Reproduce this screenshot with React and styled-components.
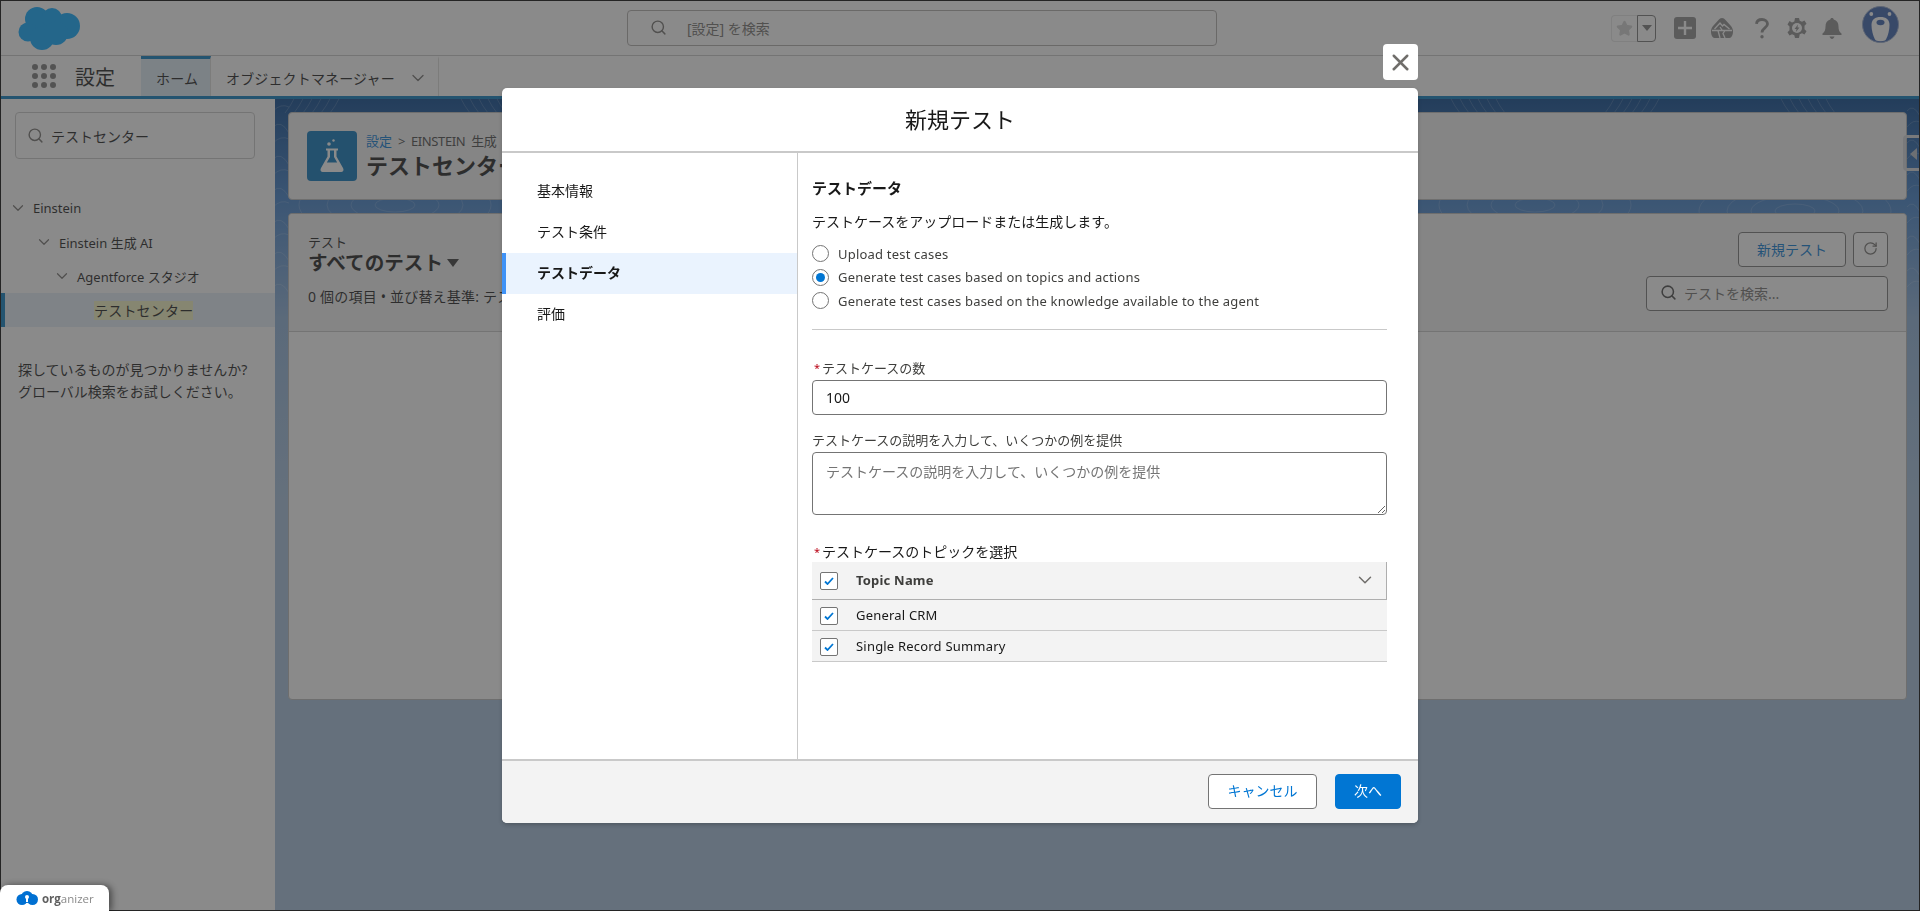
import React from "react";
import styled, { createGlobalStyle } from "styled-components";
import { ChevronDown, Search, X, Star, RotateCw } from "lucide-react";

const FONT = `"Noto Sans", "Noto Sans CJK JP", sans-serif`;

const Global = createGlobalStyle`
  * { box-sizing: border-box; }
  html, body { margin: 0; padding: 0; height: 100%; overflow: hidden; }
  body { font-family: ${FONT}; color: #181818; font-size: 13px; }
`;

const Page = styled.div`
  width: 1920px; height: 911px; display: flex; flex-direction: column;
  border: 1px solid #000; background: #fff; overflow: hidden;
`;

/* ---------- global header ---------- */
const Header = styled.header`
  height: 55px; flex: none; display: grid; grid-template-columns: 626px 590px 1fr;
  align-items: center; background: #fff; border-bottom: 1px solid #c9c9c9;
`;
const LogoCell = styled.div`padding-left: 17px; display: flex; align-items: center;`;
const GlobalSearch = styled.div`
  height: 36px; display: flex; align-items: center; gap: 20px; padding: 0 0 1px 22px;
  border: 1px solid #b0adab; border-radius: 4px; color: #706e6b; font-size: 14px;
  background: #fff;
`;
const HeaderRight = styled.div`display: flex; align-items: center; justify-content: flex-end; padding-right: 20px;`;
const FavGroup = styled.div`display: flex; height: 27px; width: 45px; margin-right: 11px;`;
const FavStar = styled.div`
  width: 26px; display: flex; align-items: center; justify-content: center;
  border: 1px solid #e5e5e5; border-right: none; border-radius: 4px 0 0 4px; color: #d0d0d0;
`;
const FavCaret = styled.div`
  width: 19px; border: 1px solid #747474; border-radius: 0 4px 4px 0;
  display: flex; align-items: center; justify-content: center;
  &::after { content: ""; border-left: 5px solid transparent; border-right: 5px solid transparent; border-top: 6px solid #777; }
`;
const IconSlot = styled.div`
  width: ${(p) => p.$w}px; display: flex; justify-content: center; align-items: center; color: #8a8a8a;
`;
const Avatar = styled.div`margin-left: 9px; width: 37px; height: 37px; margin-top: -8px;`;

/* ---------- app nav ---------- */
const Nav = styled.nav`
  height: 43px; flex: none; display: flex; background: #fff; border-bottom: 3px solid #0078be;
`;
const Launcher = styled.div`width: 140px; display: flex; align-items: center; padding-left: 31px; gap: 19px;`;
const Dots = styled.div`display: grid; grid-template-columns: repeat(3, 6px); gap: 3px;`;
const Dot = styled.span`width: 6px; height: 6px; border-radius: 50%; background: #777;`;
const AppName = styled.div`font-size: 20px; color: #181818;`;
const Tab = styled.div`
  width: ${(p) => p.$w}px; display: flex; align-items: center; font-size: 14px; padding-left: 15px;
  letter-spacing: .15px;
  border-top: 3px solid ${(p) => (p.$active ? "#0078be" : "transparent")};
  background: ${(p) => (p.$active ? "#dceaf5" : "#fff")};
  border-right: 1px solid #dddbda; color: #181818; gap: 13px;
`;

/* ---------- page body ---------- */
const Body = styled.div`flex: 1; display: flex; min-height: 0;`;
const SideBar = styled.aside`width: 274px; flex: none; background: #fff;`;
const TreeSearch = styled.div`
  margin: 13px 0 0 14px; width: 240px; height: 47px; display: flex; align-items: center;
  padding-left: 11px; gap: 7px; border: 1px solid #c9c9c9; border-radius: 4px;
  font-size: 14px; color: #181818; background: #fff;
`;
const Tree = styled.div`margin-top: 32px;`;
const TreeRow = styled.div`
  height: 34px; display: flex; align-items: center; gap: 6px; font-size: 13px;
  padding-left: ${(p) => p.$indent}px;
  color: #181818;
`;
const TreeLeaf = styled.div`
  height: 34px; display: flex; align-items: center; padding-left: 89px;
  background: #e3eef8; border-left: 4px solid #0078be; font-size: 14px;
`;
const Highlight = styled.span`background: #f4f4c0; line-height: 19px; letter-spacing: .2px;`;
const Help = styled.p`margin: 32px 0 0 17px; font-size: 14px; line-height: 22px; color: #181818;`;

const Main = styled.main`
  flex: 1; position: relative; padding: 13px 12px 0 13px; overflow: hidden;
  background: linear-gradient(180deg, #00408a 0, #3a7cc8 100px, #8aafd8 220px, #a2bedc 400px);
`;
const Contours = styled.svg`position: absolute; left: 0; top: 0; width: 1645px; height: 300px; pointer-events: none;`;
const Handle = styled.div`
  position: absolute; right: -1px; top: 36px; width: 17px; height: 36px;
  border: 3px solid #d5d8dc; border-right: none; border-radius: 4px 0 0 4px; z-index: 1;
  &::after { content: ""; position: absolute; left: 4px; top: 10px; border-right: 7px solid #b5bcc6; border-top: 6px solid transparent; border-bottom: 6px solid transparent; }
`;
const HeadCard = styled.section`
  position: relative; height: 88px; background: #f3f3f3; border-radius: 4px;
  border: 1px solid #b8b8b8; display: flex; align-items: center; padding-left: 18px; gap: 9px;
`;
const PageIcon = styled.div`
  width: 50px; height: 50px; border-radius: 4px; background: #0070b8; display: flex;
`;
const Crumbs = styled.div`font-size: 13px; white-space: nowrap; line-height: 18px; color: #444; word-spacing: 3px; letter-spacing: -.4px;`;
const CrumbLink = styled.span`color: #0176d3; letter-spacing: 0;`;
const PageTitle = styled.div`font-size: 22px; font-weight: 700; line-height: 30px; white-space: nowrap;`;

const ListCard = styled.section`
  position: relative; margin-top: 13px; height: 487px; background: #fff; border-radius: 4px;
  border: 1px solid #b8b8b8;
`;
const ListHead = styled.div`
  height: 118px; background: #f3f3f3; border-bottom: 1px solid #c9c9c9; border-radius: 4px 4px 0 0;
  display: flex; justify-content: space-between; padding: 18px 18px 0 19px;
`;
const ListLeft = styled.div`white-space: nowrap;`;
const ListKicker = styled.div`font-size: 13px; line-height: 20px;`;
const ListTitle = styled.div`
  font-size: 19.6px; font-weight: 700; line-height: 24px; margin-top: -1px; display: flex; align-items: center; gap: 4px;
  &::after { content: ""; border-left: 6px solid transparent; border-right: 6px solid transparent; border-top: 8px solid #333; }
`;
const ListMeta = styled.div`font-size: 14px; line-height: 22px; margin-top: 11px; letter-spacing: .2px;`;
const ListRight = styled.div`display: flex; flex-direction: column; align-items: flex-end; gap: 9px;`;
const ActionRow = styled.div`display: flex; gap: 7px;`;
const OutlineBtn = styled.div`
  width: ${(p) => p.$w}px; height: 35px; border: 1px solid #747474; border-radius: 4px; background: #fff;
  color: #0176d3; font-size: 14px; display: flex; align-items: center; justify-content: center; padding-bottom: 2px;
`;
const ListSearch = styled.div`
  width: 242px; height: 35px; border: 1px solid #747474; border-radius: 4px; background: #fff;
  color: #706e6b; font-size: 14px; display: flex; align-items: center; padding: 0 0 2px 13px; gap: 7px;
`;

/* ---------- modal ---------- */
const Backdrop = styled.div`
  position: fixed; inset: 0; z-index: 10; background: rgba(60, 60, 60, 0.6);
  display: flex; flex-direction: column; align-items: center; padding-top: 88px;
`;
const Modal = styled.div`
  position: relative; width: 916px; height: 735px; background: #fff; border-radius: 5px;
  display: flex; flex-direction: column; box-shadow: 0 2px 4px rgba(0,0,0,.2);
`;
const CloseBtn = styled.div`
  position: absolute; right: 0; top: -44px; width: 35px; height: 36px; background: #fff; border-radius: 4px;
  display: flex; align-items: center; justify-content: center; color: #706e6b;
`;
const ModalHead = styled.div`
  height: 65px; flex: none; border-bottom: 2px solid #c9c9c9; display: flex; align-items: center; justify-content: center;
  font-size: 22px; color: #181818; padding-bottom: 4px;
`;
const ModalBody = styled.div`flex: 1; display: flex; min-height: 0;`;
const StepNav = styled.div`width: 296px; flex: none; padding-top: 18px; border-right: 1px solid #c9c9c9;`;
const Step = styled.div`
  height: 41px; display: flex; align-items: center; font-size: 14px; padding-bottom: 3px;
  padding-left: ${(p) => (p.$active ? "31px" : "35px")};
  font-weight: ${(p) => (p.$active ? 700 : 400)};
  background: ${(p) => (p.$active ? "#eaf3fe" : "transparent")};
  border-left: ${(p) => (p.$active ? "4px solid #3f92f6" : "none")};
`;
const Content = styled.div`width: 575px; margin-left: 14px; padding-top: 24px;`;
const SectionTitle = styled.div`font-size: 15px; font-weight: 700; line-height: 22px;`;
const Desc = styled.div`font-size: 14px; line-height: 22px; margin-top: 12px;`;
const RadioGroup = styled.div`margin-top: 9px;`;
const RadioRow = styled.label`
  height: 23.5px; display: flex; align-items: center; gap: 9px; font-size: 13px; color: #3e3e3c; letter-spacing: .2px;
`;
const Radio = styled.input.attrs({ type: "radio", name: "src" })`
  appearance: none; margin: 0; width: 17px; height: 17px; border: 1px solid #747474; border-radius: 50%; background: #fff;
  flex: none; position: relative;
  &:checked::after { content: ""; position: absolute; inset: 3px; border-radius: 50%; background: #0176d3; }
`;
const Divider = styled.div`height: 1px; background: #c9c9c9; margin-top: 16px;`;
const Label = styled.div`
  font-size: ${(p) => (p.$big ? "14px" : "13px")}; line-height: 18px; color: ${(p) => (p.$big ? "#181818" : "#3e3e3c")};
  margin-top: ${(p) => p.$mt}px; display: flex;
`;
const Req = styled.span`color: #ba0517; margin-left: 2px; font-size: 11px; width: 8px; flex: none;`;
const TextInput = styled.input`
  display: block; width: 100%; height: 35px; margin-top: 3px; border: 1px solid #747474; border-radius: 4px;
  padding: 0 13px; font: 14px ${FONT}; color: #181818; background: #fff; outline: none;
`;
const TextArea = styled.textarea`
  display: block; width: 100%; height: 63px; margin-top: 3px; border: 1px solid #747474; border-radius: 4px;
  padding: 9px 13px; font: 14px/20px ${FONT}; color: #181818; background: #fff; outline: none;
  &::placeholder { color: #747474; opacity: 1; }
`;
const TableHead = styled.div`
  margin-top: 1px; height: 38px; background: #f3f3f3; border-bottom: 1px solid #aeaeae; border-right: 1px solid #aeaeae;
  display: flex; align-items: center; padding: 0 10px 0 8px; gap: 18px; font-size: 13px; font-weight: 700; color: #3e3e3c; letter-spacing: .2px;
`;
const TableName = styled.div`flex: 1;`;
const TableRow = styled.div`
  height: 31px; background: #f3f3f3; border-bottom: 1px solid #c9c9c9;
  display: flex; align-items: center; padding-left: 8px; gap: 18px; font-size: 13px; letter-spacing: .2px;
`;
const Check = styled.span`
  width: 18px; height: 18px; flex: none; border: 1px solid #747474; border-radius: 2px; background: #fff;
  display: flex; align-items: center; justify-content: center; margin-top: 2px;
`;
const ModalFoot = styled.div`
  height: 64px; flex: none; background: #f3f3f3; border-top: 2px solid #c9c9c9; border-radius: 0 0 5px 5px;
  display: flex; align-items: center; justify-content: flex-end; padding: 0 17px 2px 0; gap: 18px;
`;
const CancelBtn = styled.button`
  width: 109px; height: 35px; background: #fff; border: 1px solid #747474; border-radius: 4px;
  color: #0176d3; font: 14px ${FONT}; padding: 0 0 2px;
`;
const NextBtn = styled.button`
  width: 66px; height: 35px; background: #0176d3; border: 1px solid #0176d3; border-radius: 4px;
  color: #fff; font: 14px ${FONT}; padding: 0 0 2px;
`;

const Organizer = styled.div`
  position: fixed; left: 0; bottom: 0; z-index: 20; width: 109px; height: 26px; background: #fff; border-radius: 8px 8px 0 0;
  display: flex; align-items: center; padding: 0 0 0 16px; gap: 4px; box-shadow: 3px 0 6px rgba(0,0,0,.45);
`;
const OrgText = styled.span`font: 11.5px "Open Sans", sans-serif; color: #8a8a8a;`;
const OrgBold = styled.b`color: #5f5f5f;`;

/* ---------- drawings ---------- */
const Cloud = () => (
  <svg width="63" height="44" viewBox="0 0 63 44">
    <g fill="#00a5ff">
      <circle cx="19" cy="13" r="12" /><circle cx="34" cy="12" r="10" /><circle cx="49" cy="20" r="13" />
      <circle cx="10" cy="26" r="9.5" /><circle cx="24" cy="32" r="12" /><circle cx="38" cy="27" r="12" />
    </g>
  </svg>
);
const Trailhead = () => (
  <svg width="22" height="20" viewBox="0 0 22 20">
    <path fill="currentColor" d="M11 0c1.500 0 2.500.8 3.500 2l5 5.500c1.500 1.600 2.500 3.500 2.500 6 0 3.500-1.500 6.500-3.500 6.500h-15C1.500 20 0 17 0 13.500c0-2.500 1-4.400 2.500-6l5-5.500C8.500.8 9.500 0 11 0z" />
    <path fill="none" stroke="#fff" strokeWidth="1.300" d="M3.500 11 9 5l2.500 3L13 6.500 18.500 11M1 12.500h20M7 12.500 9 20M14 12.500l-2 3 2 4.500M9 9l2 3" />
  </svg>
);
const Question = () => (
  <svg width="14" height="21" viewBox="0 0 14 21" fill="none" stroke="currentColor" strokeWidth="2.800">
    <path d="M1.500 5.800C1.700 3 3.800 1.500 7 1.500s5.500 1.800 5.500 4.500c0 3.800-5.500 4-5.500 8.500" />
    <circle cx="7" cy="18.800" r="1.700" fill="currentColor" stroke="none" />
  </svg>
);
const Gear = () => (
  <svg width="20" height="20" viewBox="0 0 20 20">
    <path fill="currentColor" d="M8 0h4l.7 2.800 2.300 1 2.500-1.400 2 3.400-2 2 0 3.400 2 2-2 3.400-2.500-1.400-2.300 1L12 20H8l-.7-2.800-2.300-1-2.500 1.400-2-3.400 2-2V8.400l-2-2 2-3.400L5 4.400l2.300-1z" />
    <circle cx="10" cy="10" r="5" fill="#fff" />
    <path fill="currentColor" d="M11 6.500 7.500 11h2l-.6 3L12.500 9.500h-2z" />
  </svg>
);
const Bell = () => (
  <svg width="20" height="21" viewBox="0 0 20 21" fill="currentColor">
    <path d="M10 0c1 0 1.700.7 1.700 1.600C15 2.400 16.500 5 16.500 8.500c0 3.500.8 5.500 3 7v1.500H.5v-1.500c2.200-1.500 3-3.500 3-7 0-3.500 1.500-6.100 4.800-6.900C8.300.7 9 0 10 0z" />
    <path d="M7.500 18.500h5C12 20 11 21 10 21s-2-1-2.500-2.500z" />
  </svg>
);
const Bear = () => (
  <svg width="37" height="37" viewBox="0 0 37 37">
    <circle cx="18.500" cy="18.500" r="18" fill="#335cab" stroke="#8fa3c7" strokeWidth="1" />
    <circle cx="9.300" cy="8" r="1.900" fill="#fff" /><circle cx="27.500" cy="8" r="1.900" fill="#fff" />
    <path d="M18.500 11c5.500 0 9 2.500 9 8 0 6-2.500 14-4.500 15.500-2.500 1-6.500 1-9 0C12 33 9.500 25 9.500 19c0-5.500 3.500-8 9-8z" fill="#fff" />
    <ellipse cx="18.500" cy="16.500" rx="4" ry="2.800" fill="#335cab" />
  </svg>
);
const Flask = () => (
  <svg width="50" height="50" viewBox="0 0 50 50" fill="#fff">
    <path fillRule="evenodd" d="M19 17.500h12v2h-1.500v6L36 37c1.300 2.500 0 4-2.500 4h-17c-2.500 0-3.800-1.500-2.500-4l6.500-11.500v-6H19zM23 19.500v6.600L19.800 31.500h10.400L27 26.100v-6.600z" />
    <circle cx="22" cy="13" r="1.800" /><circle cx="26.500" cy="9.500" r="1.200" />
  </svg>
);
const Tick = () => (
  <svg width="10" height="8" viewBox="0 0 10 8"><path d="M1 4.500 3.500 7 9 1" fill="none" stroke="#0176d3" strokeWidth="1.800" /></svg>
);
const OrgCloud = () => (
  <svg width="22" height="15" viewBox="0 0 22 15">
    <g fill="#0070d2"><circle cx="6" cy="8.500" r="5.500" /><circle cx="11" cy="6" r="6" /><circle cx="16.500" cy="8.500" r="5.500" /></g>
    <circle cx="11" cy="6" r="2" fill="#fff" /><rect x="10" y="6" width="2" height="5" fill="#fff" />
  </svg>
);

/* topographic decoration of the page background */
const hatch = Array.from({ length: 60 }, (_, i) => {
  const group = Math.floor(i / 6);
  const x = 20 + group * 165 + (i % 6) * 9;
  const lean = group % 2 ? 10 : -10;
  return `M${x} -2 q${lean / 2} 10 ${lean} 16`;
});
const rings = [120, 420, 760, 980, 1260, 1520].flatMap((cx, k) =>
  [10, 22, 34, 48].map((r) => ({ cx, cy: 106 + (k % 2) * 6, rx: r * 2, ry: r * 0.7 }))
);
const sideLines = Array.from({ length: 12 }, (_, i) => `M-2 ${12 + i * 16} q8 -8 16 ${i % 2 ? 6 : -4}`);
const rightLines = Array.from({ length: 12 }, (_, i) => `M1632 ${12 + i * 16} q6 -8 13 ${i % 2 ? -5 : 5}`);

export default function App() {
  const dots = Array.from({ length: 9 }, (_, i) => <Dot key={i} />);
  const chevron = <ChevronDown size={18} strokeWidth={1.6} color="#706e6b" />;
  return (
    <>
      <Global />
      <Page>
        <Header>
          <LogoCell><Cloud /></LogoCell>
          <GlobalSearch><Search size={17} strokeWidth={2} />[設定] を検索</GlobalSearch>
          <HeaderRight>
            <FavGroup>
              <FavStar><Star size={17} fill="currentColor" /></FavStar>
              <FavCaret />
            </FavGroup>
            <IconSlot $w={36}>
              <svg width="22" height="22" viewBox="0 0 22 22"><rect width="22" height="22" rx="3" fill="currentColor" /><path d="M11 4v14M4 11h14" stroke="#fff" strokeWidth="2.400" /></svg>
            </IconSlot>
            <IconSlot $w={38}><Trailhead /></IconSlot>
            <IconSlot $w={42}><Question /></IconSlot>
            <IconSlot $w={28}><Gear /></IconSlot>
            <IconSlot $w={42}><Bell /></IconSlot>
            <Avatar><Bear /></Avatar>
          </HeaderRight>
        </Header>
        <Nav>
          <Launcher><Dots>{dots}</Dots><AppName>設定</AppName></Launcher>
          <Tab $w={70} $active>ホーム</Tab>
          <Tab $w={228}>オブジェクトマネージャー<ChevronDown size={20} strokeWidth={1.6} color="#706e6b" /></Tab>
        </Nav>
        <Body>
          <SideBar>
            <TreeSearch><Search size={17} color="#706e6b" strokeWidth={2} />テストセンター</TreeSearch>
            <Tree>
              <TreeRow $indent={8}>{chevron}Einstein</TreeRow>
              <TreeRow $indent={34}>{chevron}Einstein 生成 AI</TreeRow>
              <TreeRow $indent={52}>{chevron}Agentforce スタジオ</TreeRow>
              <TreeLeaf><Highlight>テストセンター</Highlight></TreeLeaf>
            </Tree>
            <Help>探しているものが見つかりませんか?<br />グローバル検索をお試しください。</Help>
          </SideBar>
          <Main>
            <Contours viewBox="0 0 1645 300">
              <g fill="none" stroke="#fff" strokeOpacity=".16" strokeWidth="1">
                {hatch.map((d, i) => <path key={i} d={d} />)}
                {sideLines.map((d, i) => <path key={i} d={d} />)}
                {rightLines.map((d, i) => <path key={i} d={d} />)}
                {rings.map((e, i) => <ellipse key={i} cx={e.cx} cy={e.cy} rx={e.rx} ry={e.ry} />)}
              </g>
            </Contours>
            <Handle />
            <HeadCard>
              <PageIcon><Flask /></PageIcon>
              <div>
                <Crumbs><CrumbLink>設定</CrumbLink> &gt; EINSTEIN 生成 AI &gt; AGENTFORCE スタジオ</Crumbs>
                <PageTitle>テストセンター</PageTitle>
              </div>
            </HeadCard>
            <ListCard>
              <ListHead>
                <ListLeft>
                  <ListKicker>テスト</ListKicker>
                  <ListTitle>すべてのテスト</ListTitle>
                  <ListMeta>0 個の項目 • 並び替え基準: テスト名</ListMeta>
                </ListLeft>
                <ListRight>
                  <ActionRow>
                    <OutlineBtn $w={108}>新規テスト</OutlineBtn>
                    <OutlineBtn $w={35}><RotateCw size={15} color="#706e6b" strokeWidth={2} /></OutlineBtn>
                  </ActionRow>
                  <ListSearch><Search size={17} strokeWidth={2.200} color="#444" />テストを検索...</ListSearch>
                </ListRight>
              </ListHead>
            </ListCard>
          </Main>
        </Body>
      </Page>
      <Backdrop>
        <Modal>
          <CloseBtn><X size={27} strokeWidth={2.200} /></CloseBtn>
          <ModalHead>新規テスト</ModalHead>
          <ModalBody>
            <StepNav>
              <Step>基本情報</Step>
              <Step>テスト条件</Step>
              <Step $active>テストデータ</Step>
              <Step>評価</Step>
            </StepNav>
            <Content>
              <SectionTitle>テストデータ</SectionTitle>
              <Desc>テストケースをアップロードまたは生成します。</Desc>
              <RadioGroup>
                <RadioRow><Radio />Upload test cases</RadioRow>
                <RadioRow><Radio defaultChecked />Generate test cases based on topics and actions</RadioRow>
                <RadioRow><Radio />Generate test cases based on the knowledge available to the agent</RadioRow>
              </RadioGroup>
              <Divider />
              <Label $mt={29}><Req>*</Req>テストケースの数</Label>
              <TextInput defaultValue="100" />
              <Label $mt={16}>テストケースの説明を入力して、いくつかの例を提供</Label>
              <TextArea placeholder="テストケースの説明を入力して、いくつかの例を提供" />
              <Label $mt={28} $big><Req>*</Req>テストケースのトピックを選択</Label>
              <TableHead>
                <Check><Tick /></Check>
                <TableName>Topic Name</TableName>
                <ChevronDown size={22} strokeWidth={1.600} color="#706e6b" />
              </TableHead>
              <TableRow><Check><Tick /></Check>General CRM</TableRow>
              <TableRow><Check><Tick /></Check>Single Record Summary</TableRow>
            </Content>
          </ModalBody>
          <ModalFoot>
            <CancelBtn>キャンセル</CancelBtn>
            <NextBtn>次へ</NextBtn>
          </ModalFoot>
        </Modal>
      </Backdrop>
      <Organizer>
        <OrgCloud />
        <OrgText><OrgBold>org</OrgBold>anizer</OrgText>
      </Organizer>
    </>
  );
}
